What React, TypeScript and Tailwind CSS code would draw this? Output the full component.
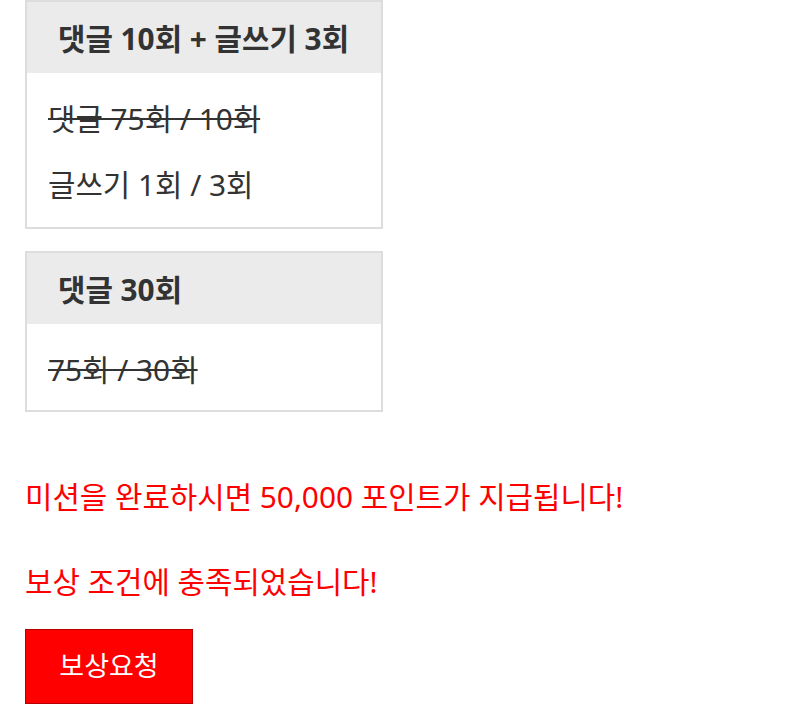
import React from "react";

const FONT = "font-['Noto_Sans','Noto_Sans_CJK_KR',sans-serif]";

function MissionBox({ title, children }: { title: string; children: React.ReactNode }) {
  return (
    <div className="w-[358px] border-2 border-[#dddddd] bg-white">
      <div className="whitespace-nowrap bg-[#ebebeb] pl-[31px] pr-2 pt-[17px] pb-[14px] text-[29.8px] font-bold leading-[40px] text-[#333333]">
        {title}
      </div>
      <div className="flex flex-col gap-[26px] px-[21px] pt-[26px] pb-[20px] text-[29.8px] leading-[40px] text-[#333333]">
        {children}
      </div>
    </div>
  );
}

export default function App() {
  return (
    <div className={`${FONT} min-h-screen bg-white pl-[25px] pt-0`}>
      <div className="flex flex-col gap-[22px]">
        <MissionBox title="댓글 10회 + 글쓰기 3회">
          <p className="line-through decoration-2">댓글 75회 / 10회</p>
          <p className="pb-[2px]">글쓰기 1회 / 3회</p>
        </MissionBox>
        <MissionBox title="댓글 30회">
          <p className="line-through decoration-2">75회 / 30회</p>
        </MissionBox>
      </div>

      <div className="mt-[65px] flex flex-col gap-[45px] text-[29.8px] leading-[40px] text-[#ff0000]">
        <p>미션을 완료하시면 50,000 포인트가 지급됩니다!</p>
        <p>보상 조건에 충족되었습니다!</p>
      </div>

      <button className="mt-[27px] h-[75px] w-[168px] border border-[#b40000] bg-[#ff0000] text-[27px] text-white">
        보상요청
      </button>
    </div>
  );
}
